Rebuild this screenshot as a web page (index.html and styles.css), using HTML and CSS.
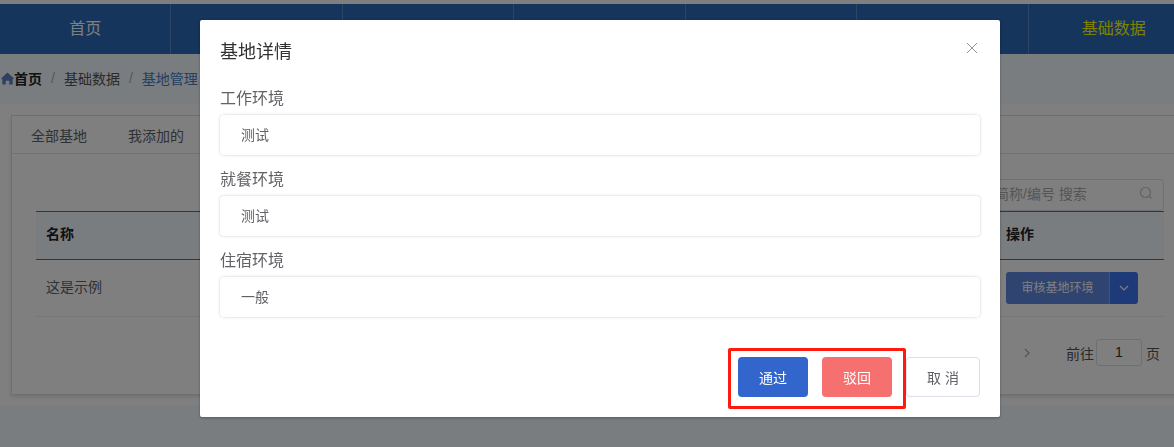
FILE: index.html
```html
<!DOCTYPE html>
<html lang="zh-CN">
<head>
    <meta charset="UTF-8">
    <title>基地详情</title>
    <link rel="stylesheet" href="styles.css">
</head>
<body>
    <div class="top-strip"></div>
    <div class="nav">
        <div class="nav-item">首页</div>
        <div class="nav-item"></div>
        <div class="nav-item"></div>
        <div class="nav-item"></div>
        <div class="nav-item"></div>
        <div class="nav-item"></div>
        <div class="nav-item active">基础数据</div>
    </div>

    <div class="crumbs">
        <svg class="home-icon" viewBox="0 0 12 12"><path d="M6 .5 L12 6 L10.8 6.6 L10.8 11.5 L7.6 11.5 L7.6 8 L4.4 8 L4.4 11.5 L1.2 11.5 L1.2 6.6 L0 6 Z"/></svg>
        <b>首页</b>
        <span class="sep">/</span>
        <span>基础数据</span>
        <span class="sep">/</span>
        <span class="crumb-link">基地管理</span>
    </div>

    <div class="content">
        <div class="card">
            <div class="tabs">
                <span>全部基地</span>
                <span>我添加的</span>
            </div>
            <div class="card-body">
                <div class="search-row">
                    <div class="search">
                        <span>简称/编号 搜索</span>
                        <svg class="search-icon" viewBox="0 0 14 14"><circle cx="6.5" cy="6.5" r="5"/><path d="M10.2 10.2 L12.5 12.5"/></svg>
                    </div>
                </div>
                <div class="table-head">
                    <span>名称</span>
                    <span class="col-action">操作</span>
                </div>
                <div class="table-row">
                    <span class="row-name">这是示例</span>
                    <div class="col-action split-btn">
                        <div class="split-main">审核基地环境</div>
                        <div class="split-drop">
                            <svg viewBox="0 0 10 6"><path d="M1 1 L5 5 L9 1"/></svg>
                        </div>
                    </div>
                </div>
                <div class="pager">
                    <svg class="pager-next" viewBox="0 0 6 10"><path d="M1 1 L5 5 L1 9"/></svg>
                    <span>前往</span>
                    <div class="pager-input">1</div>
                    <span>页</span>
                </div>
            </div>
        </div>
    </div>
    <div class="page-foot"></div>

    <div class="overlay">
        <div class="modal">
            <div class="modal-head">
                <span>基地详情</span>
                <svg class="close-icon" viewBox="0 0 12 12"><path d="M1 1 L11 11 M11 1 L1 11"/></svg>
            </div>
            <div class="modal-body">
                <div class="field-label">工作环境</div>
                <div class="field-box">测试</div>
                <div class="field-label">就餐环境</div>
                <div class="field-box">测试</div>
                <div class="field-label">住宿环境</div>
                <div class="field-box">一般</div>
            </div>
            <div class="modal-foot">
                <div class="highlight">
                    <button class="btn btn-pass">通过</button>
                    <button class="btn btn-reject">驳回</button>
                </div>
                <button class="btn btn-cancel">取 消</button>
            </div>
        </div>
    </div>
</body>
</html>
```

FILE: styles.css
```css
html, body {
    margin: 0;
    height: 100%;
    overflow: hidden;
}

body {
    width: 1174px;
    background-color: #f4fbff;
    font-family: "Liberation Sans", "Noto Sans CJK SC", sans-serif;
    font-size: 14px;
    color: #606266;
}

.top-strip {
    height: 4px;
    background-color: #fff;
}

.nav {
    display: flex;
    width: 1200px;
    height: 50px;
    background-color: #2a6ab8;
}
.nav-item {
    width: 171.43px;
    box-sizing: border-box;
    padding-bottom: 4px;
    border-right: 1px solid #5b8ac4;
    display: flex;
    align-items: center;
    justify-content: center;
    font-size: 16px;
    color: #fff;
}
.nav-item.active {
    color: #ffff00;
}

.crumbs {
    height: 50px;
    box-sizing: border-box;
    padding-bottom: 2px;
    display: flex;
    align-items: center;
    color: #555;
}
.crumbs b {
    color: #222;
}
.home-icon {
    width: 13px;
    height: 13px;
    margin-left: 1px;
    fill: #5b85c0;
}
.sep {
    margin: 0 9px;
    color: #aaa;
}
.crumb-link {
    color: #4a7cc4;
}

.content {
    width: 1200px;
    height: 301px;
    padding: 11px 0 0 11px;
    box-sizing: border-box;
    background-color: #ffffff;
}
.card {
    height: 280px;
    box-sizing: border-box;
    border: 1px solid #dcdfe6;
    box-shadow: 0 2px 4px rgba(0, 0, 0, 0.12);
    background-color: #fff;
}

.tabs {
    height: 37px;
    display: flex;
    align-items: center;
    gap: 41px;
    padding-left: 19px;
    border-bottom: 1px solid #e4e7ed;
}

.card-body {
    padding: 0 35px 0 24px;
}

.search-row {
    height: 57px;
    display: flex;
    justify-content: flex-end;
    align-items: flex-end;
}
.search {
    width: 300px;
    height: 32px;
    box-sizing: border-box;
    border: 1px solid #dcdfe6;
    border-radius: 4px;
    display: flex;
    align-items: center;
    justify-content: space-between;
    padding: 0 10px 5px 130px;
    color: #aaa;
}
.search-icon {
    width: 14px;
    height: 14px;
    fill: none;
    stroke: #c0c4cc;
    stroke-width: 1.2;
}

.table-head {
    height: 49px;
    box-sizing: border-box;
    display: flex;
    align-items: center;
    justify-content: space-between;
    padding: 0 0 5px 10px;
    border-top: 1px solid #3a70d8;
    border-bottom: 1px solid #3a70d8;
    background-color: #f4fbff;
    font-weight: bold;
    color: #222;
}
.col-action {
    width: 158px;
    flex: none;
}

.table-row {
    height: 56px;
    display: flex;
    align-items: center;
    justify-content: space-between;
    padding-left: 10px;
    border-bottom: 1px solid #ebeef5;
}
.row-name {
    margin-bottom: 4px;
}
.split-btn {
    display: flex;
    height: 32px;
    font-size: 12px;
}
.split-main {
    width: 103px;
    background-color: #5e88e0;
    color: #fff;
    border-radius: 3px 0 0 3px;
    border-right: 1px solid #8aa8e8;
    text-align: center;
    line-height: 32px;
}
.split-drop {
    width: 28px;
    background-color: #3c74f0;
    border-radius: 0 3px 3px 0;
    display: flex;
    align-items: center;
    justify-content: center;
}
.split-drop svg {
    width: 10px;
    height: 6px;
    fill: none;
    stroke: #fff;
    stroke-width: 1.2;
}

.pager {
    display: flex;
    align-items: center;
    height: 27px;
    margin-top: 22px;
    padding-left: 988px;
    color: #555;
}
.pager-next {
    width: 6px;
    height: 10px;
    margin-right: 36px;
    fill: none;
    stroke: #aaa;
    stroke-width: 1.2;
}
.pager-input {
    width: 46px;
    height: 27px;
    box-sizing: border-box;
    margin: 0 4px 0 2px;
    border: 1px solid #dcdfe6;
    border-radius: 3px;
    text-align: center;
    line-height: 25px;
    color: #333;
}

.overlay {
    position: fixed;
    inset: 0;
    background-color: rgba(0, 0, 0, 0.5);
}
.modal {
    position: absolute;
    left: 200px;
    top: 20px;
    width: 800px;
    height: 397px;
    background-color: #fff;
    border-radius: 2px;
    box-shadow: 0 1px 3px rgba(0, 0, 0, 0.3);
}
.modal-head {
    height: 65px;
    padding: 20px 20px 0;
    box-sizing: border-box;
    display: flex;
    justify-content: space-between;
    font-size: 18px;
    line-height: 24px;
    color: #303133;
}
.close-icon {
    width: 12px;
    height: 12px;
    margin-top: 2px;
    margin-right: 2px;
    fill: none;
    stroke: #909399;
    stroke-width: 1;
}

.modal-body {
    padding: 0 20px;
}
.field-label {
    margin-top: 11px;
    margin-bottom: 2px;
    font-size: 16px;
    line-height: 28px;
}
.field-label:first-child {
    margin-top: 0;
}
.field-box {
    height: 40px;
    box-sizing: border-box;
    padding-left: 21px;
    border-radius: 4px;
    box-shadow: 0 0 3px rgba(0, 0, 0, 0.2);
    line-height: 40px;
    font-size: 14px;
}

.modal-foot {
    display: flex;
    justify-content: flex-end;
    align-items: flex-start;
    margin-top: 31px;
    padding-right: 20px;
}
.highlight {
    display: flex;
    gap: 14px;
    height: 61px;
    box-sizing: border-box;
    padding: 6px 11px 0 7px;
    border: 3px solid #ff1a10;
    border-radius: 2px;
}
.btn {
    height: 40px;
    width: 70px;
    border: none;
    border-radius: 4px;
    font-family: inherit;
    font-size: 14px;
    color: #fff;
    padding: 0;
}
.btn-pass {
    background-color: #3366cc;
}
.btn-reject {
    background-color: #f67070;
}
.btn-cancel {
    width: 74px;
    margin-top: 9px;
    background-color: #fff;
    border: 1px solid #dcdfe6;
    color: #606266;
}
```
